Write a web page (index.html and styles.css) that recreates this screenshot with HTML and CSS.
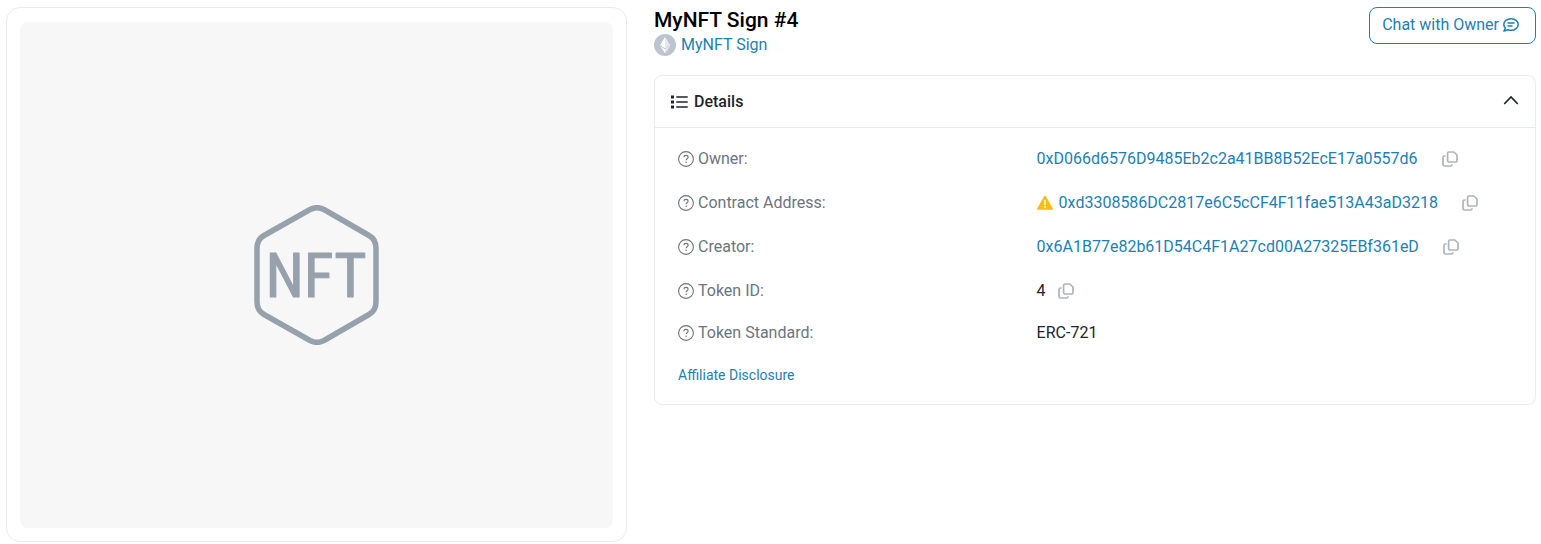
FILE: index.html
```
<!DOCTYPE html>
<html lang="en">
<head>
<meta charset="utf-8">
<meta name="viewport" content="width=device-width, initial-scale=1">
<title>MyNFT Sign #4</title>
<link rel="stylesheet" href="styles.css">
</head>
<body>
<svg class="sprite" aria-hidden="true">
  <symbol id="help" viewBox="0 0 16 16">
    <circle cx="8" cy="8" r="7.4" fill="none" stroke="currentColor" stroke-width="1.1"/>
    <path d="M5.900 6.300c0-1.200.9-1.900 2.100-1.900s2.100.7 2.100 1.800c0 1.500-2 1.600-2 3.100" fill="none" stroke="currentColor" stroke-width="1.100"/>
    <circle cx="8.1" cy="11.3" r=".75" fill="currentColor"/>
  </symbol>
  <symbol id="copy" viewBox="0 0 16 16">
    <path d="M7 1h4.800L15 4v5.600a1.400 1.400 0 0 1-1.400 1.400H7a1.400 1.400 0 0 1-1.400-1.400V2.400A1.400 1.400 0 0 1 7 1zM3.600 5H2.400A1.400 1.400 0 0 0 1 6.400v7.200A1.400 1.400 0 0 0 2.400 15H8.600a1.400 1.400 0 0 0 1.400-1.400v-.4" fill="none" stroke="currentColor" stroke-width="1.700" stroke-linejoin="round"/>
  </symbol>
</svg>
<main class="page">
  <section class="media-card">
    <div class="media">
      <svg class="nft-logo" viewBox="0 0 126 140" role="img" aria-label="NFT">
        <path d="M56 4.500Q63 .8 70 4.500L115 30.500Q122 34.500 122 43V97Q122 105.500 115 109.500L70 135.500Q63 139.200 56 135.500L10 109.500Q3 105.500 3 97V43Q3 34.500 10 30.500Z" fill="none" stroke="currentColor" stroke-width="5.500"/>
        <text class="nft-text" x="62" y="92" text-anchor="middle">NFT</text>
      </svg>
    </div>
  </section>
  <section class="info">
    <header class="heading">
      <div>
        <h1 class="title">MyNFT Sign #4</h1>
        <a class="collection" href="#">
          <svg width="22" height="22" viewBox="0 0 22 22" aria-hidden="true">
            <circle cx="11" cy="11" r="11" fill="#bcc4cf"/>
            <path d="M11 3l5 8.200-5 3-5-3zM6.200 12.500L11 15.300l4.800-2.800L11 19z" fill="#fff"/>
            <path d="M11 3v11.200l5-3zM11 15.300V19l4.800-6.500z" fill="#e5e9ee"/>
          </svg>
          <span>MyNFT Sign</span>
        </a>
      </div>
      <button class="chat" type="button">Chat with Owner
        <svg width="16" height="16" viewBox="0 0 16 16" fill="none" stroke="currentColor" stroke-width="1.500" stroke-linecap="round" stroke-linejoin="round" aria-hidden="true">
          <path d="M2.300 10.800C1.300 9.900.8 8.800.8 7.500.8 4.300 4 1.700 8 1.700s7.200 2.600 7.200 5.800S12 13.300 8 13.300c-1.100 0-2.200-.2-3.100-.6-1.200.8-2.600 1.200-4 1.200.7-.9 1.300-1.900 1.400-3.100zM5 6h6M5 9h4"/>
        </svg>
      </button>
    </header>
    <section class="details">
      <button class="details-toggle" type="button" aria-expanded="true">
        <svg width="17" height="14" viewBox="0 0 17 14" aria-hidden="true">
          <path d="M0 .5h3v3H0zM0 5.500h3v3H0zM0 10.500h3v3H0z" fill="currentColor"/>
          <path d="M5.800 2H16.200M5.800 7H16.200M5.800 12H16.200" stroke="currentColor" stroke-width="1.500" stroke-linecap="round"/>
        </svg>
        <span class="details-title">Details</span>
        <svg width="16" height="16" viewBox="0 0 16 16" fill="none" stroke="currentColor" stroke-width="1.700" stroke-linecap="round" aria-hidden="true"><path d="M1.700 9.500L8 3 14.300 9.500"/></svg>
      </button>
      <div class="details-body">
        <dl class="rows">
          <div class="row">
            <dt class="label"><svg width="16" height="16" aria-hidden="true"><use href="#help"/></svg>Owner:</dt>
            <dd class="value"><a class="address" href="#">0xD066d6576D9485Eb2c2a41BB8B52EcE17a0557d6</a><button class="copy" type="button" aria-label="Copy owner address"><svg width="16" height="16"><use href="#copy"/></svg></button></dd>
          </div>
          <div class="row">
            <dt class="label"><svg width="16" height="16" aria-hidden="true"><use href="#help"/></svg>Contract Address:</dt>
            <dd class="value">
              <svg class="warning" width="16" height="16" viewBox="0 0 16 16" aria-hidden="true"><path d="M8 1.500L15.200 14H.8z" fill="#fbbc14" stroke="#fbbc14" stroke-width="1.600" stroke-linejoin="round"/><path d="M8 5.500v4" stroke="#fff" stroke-width="1.500" stroke-linecap="round"/><circle cx="8" cy="12" r=".9" fill="#fff"/></svg>
              <a class="address" href="#">0xd3308586DC2817e6C5cCF4F11fae513A43aD3218</a><button class="copy" type="button" aria-label="Copy contract address"><svg width="16" height="16"><use href="#copy"/></svg></button></dd>
          </div>
          <div class="row">
            <dt class="label"><svg width="16" height="16" aria-hidden="true"><use href="#help"/></svg>Creator:</dt>
            <dd class="value"><a class="address" href="#">0x6A1B77e82b61D54C4F1A27cd00A27325EBf361eD</a><button class="copy" type="button" aria-label="Copy creator address"><svg width="16" height="16"><use href="#copy"/></svg></button></dd>
          </div>
          <div class="row">
            <dt class="label"><svg width="16" height="16" aria-hidden="true"><use href="#help"/></svg>Token ID:</dt>
            <dd class="value"><span>4</span><button class="copy copy-near" type="button" aria-label="Copy token ID"><svg width="16" height="16"><use href="#copy"/></svg></button></dd>
          </div>
          <div class="row row-plain">
            <dt class="label"><svg width="16" height="16" aria-hidden="true"><use href="#help"/></svg>Token Standard:</dt>
            <dd class="value">ERC-721</dd>
          </div>
        </dl>
        <a class="disclosure" href="#">Affiliate Disclosure</a>
      </div>
    </section>
  </section>
</main>
</body>
</html>
```
FILE: styles.css
```
* { box-sizing: border-box; }
body {
  margin: 0;
  background: #fff;
  color: #212529;
  font: 16px/24px Roboto, "Liberation Sans", sans-serif;
}
a { color: #1d7fb3; text-decoration: none; }
button { font: inherit; cursor: pointer; }
svg { flex: none; }
.sprite { position: absolute; width: 0; height: 0; }
.page {
  display: grid;
  grid-template-columns: 621fr 882fr;
  align-items: start;
  gap: 27px;
  padding: 7px 5px 2px 6px;
}
.media-card {
  padding: 14px 13px 13px;
  border: 1px solid #e9ecef;
  border-radius: 14px;
}
.media {
  display: flex;
  align-items: center;
  justify-content: center;
  min-height: 506px;
  border-radius: 8px;
  background: #f7f7f7;
  color: #97a1ac;
}
.nft-logo { width: 126px; height: 140px; }
.nft-text {
  fill: currentColor;
  stroke: currentColor;
  stroke-width: 1px;
  stroke-linejoin: round;
  font: 62px "Roboto Condensed", "Liberation Sans Narrow", Roboto, sans-serif;
}
.info { min-width: 0; }
.heading {
  display: flex;
  align-items: flex-start;
  justify-content: space-between;
  margin-bottom: 18px;
}
.title {
  margin: 0;
  color: #000;
  font-size: 21px;
  font-weight: 500;
  line-height: 26px;
}
.collection { display: flex; align-items: center; gap: 5px; }
.chat {
  display: flex;
  align-items: center;
  gap: 4px;
  padding: 5px 16px 6px 12px;
  border: 1px solid #1d7fb3;
  border-radius: 8px;
  background: #fff;
  color: #1d7fb3;
}
.details { border: 1px solid #e9ecef; border-radius: 8px; }
.details-toggle {
  display: flex;
  align-items: center;
  gap: 6px;
  width: 100%;
  padding: 14px 16px 13px;
  border: 0;
  border-bottom: 1px solid #e9ecef;
  background: none;
  color: #212529;
}
.details-title { flex: 1; font-weight: 500; text-align: left; }
.details-body { padding: 17px 23px 15px; }
.rows { display: grid; gap: 16px; margin: 0 0 16px; }
.row {
  display: grid;
  grid-template-columns: 43% 1fr;
  align-items: center;
  min-height: 28px;
}
.row-plain { min-height: 24px; }
.label { display: flex; align-items: center; gap: 4px; color: #6c757d; }
.value { display: flex; align-items: center; min-width: 0; margin: 0; }
.warning { margin-right: 6px; }
.copy {
  display: flex;
  margin-left: 24px;
  padding: 0;
  border: 0;
  background: none;
  color: #adb5bd;
}
.copy-near { margin-left: 12px; }
.disclosure { display: block; width: fit-content; font-size: 14px; line-height: 28px; }
```
